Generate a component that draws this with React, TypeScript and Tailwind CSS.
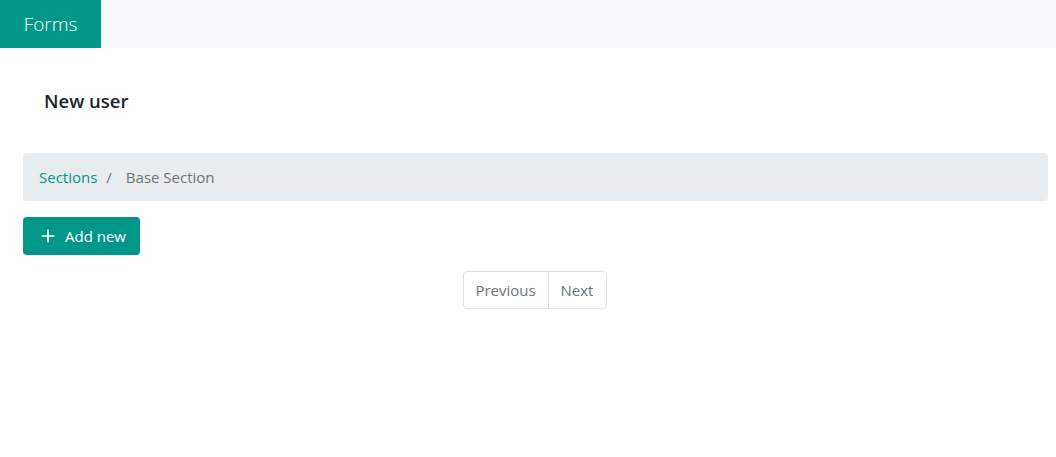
import { Plus } from "lucide-react";

export default function App() {
  return (
    <div className="min-h-[457px] bg-white font-['Open_Sans',sans-serif]">
      {/* === Top bar === */}
      <div className="flex h-12 bg-[#f8f9fa]">
        <div className="flex w-[101px] items-center justify-center bg-[#009688] text-[19px] font-light text-white">
          Forms
        </div>
      </div>

      {/* === Header === */}
      <div className="pl-11 pt-[39px] pb-[39px]">
        <h1 className="text-[18.5px] leading-[27px] font-semibold text-[#212529]">New user</h1>
      </div>

      <div className="ml-[23px] mr-2">
        {/* === Breadcrumb === */}
        <nav className="flex h-12 items-center rounded bg-[#e9ecef] px-4 text-[15px]">
          <span className="text-[#009688]">Sections</span>
          <span className="pl-[9px] pr-[10px] text-[#6c757d]">/</span>
          <span className="pl-1 text-[#6c757d]">Base Section</span>
        </nav>

        {/* === Add new === */}
        <div className="mt-4">
          <button className="flex h-[38px] w-[117px] items-center gap-[7px] rounded-sm bg-[#009688] pl-[15px] text-[15px] text-white">
            <Plus size={20} strokeWidth={2} />
            <span>Add new</span>
          </button>
        </div>

        {/* === Pagination === */}
        <div className="mt-4 flex justify-center pr-[2px]">
          <div className="flex h-[38px] rounded-sm border border-[#dee2e6] text-[15px] text-[#6c757d]">
            <span className="flex w-[85px] items-center justify-center border-r border-[#dee2e6]">Previous</span>
            <span className="flex w-[57px] items-center justify-center">Next</span>
          </div>
        </div>
      </div>
    </div>
  );
}
